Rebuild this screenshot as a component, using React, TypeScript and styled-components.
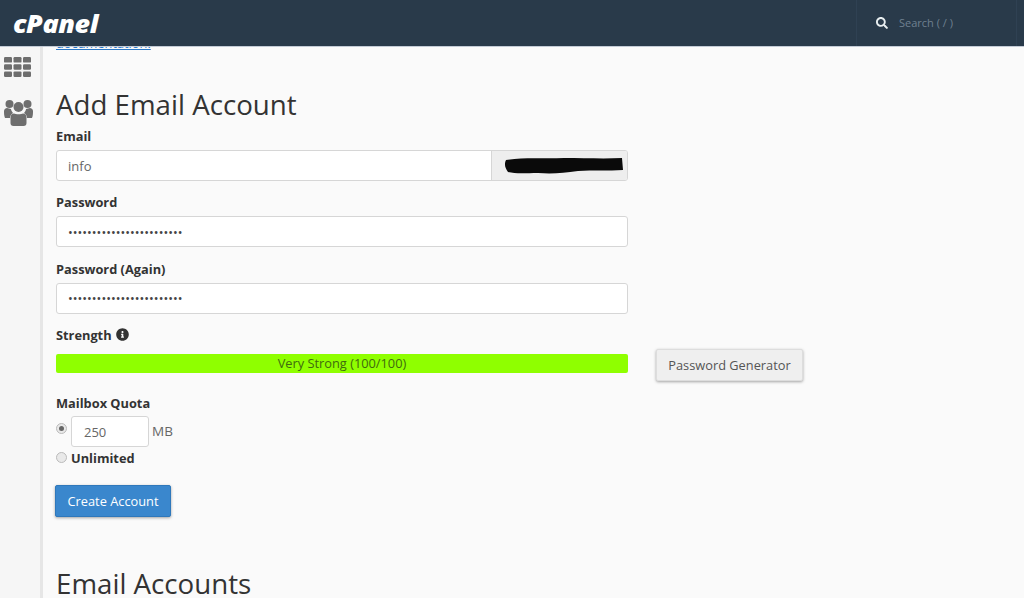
import styled, {createGlobalStyle} from "styled-components";
import {FaInfoCircle, FaSearch} from "react-icons/fa";

const GlobalStyle = createGlobalStyle`
  html, body {
    margin: 0;
    padding: 0;
    height: 100%;
    overflow: hidden;
    background: #fafafa;
    font-family: "Open Sans", "Liberation Sans", sans-serif;
    font-size: 12.8px;
    color: #333;
  }
`;

const Page = styled.div`
  width: 1024px;
  height: 598px;
  display: flex;
  flex-direction: column;
  overflow: hidden;
`;

const TopBar = styled.header`
  height: 47px;
  flex: none;
  display: flex;
  align-items: center;
  justify-content: space-between;
  background: #293a4a;
  border-bottom: 1px solid #c3cbd6;
  box-sizing: border-box;
  position: relative;
  z-index: 2;
`;

const Logo = styled.div`
  margin-left: 13px;
  font-family: "Open Sans", sans-serif;
  font-size: 24px;
  font-weight: 800;
  font-style: italic;
  letter-spacing: -0.4px;
  color: #fff;
  transform: scaleX(1.12);
  transform-origin: left center;
`;

const SearchBox = styled.div`
  width: 161px;
  height: 100%;
  margin-right: 7px;
  box-sizing: border-box;
  display: flex;
  align-items: center;
  gap: 11px;
  padding: 0 0 1px 19px;
  border-left: 1px solid #2f4153;
  border-right: 1px solid #2f4153;
  font-size: 11px;
  color: #6f8090;

  svg {
    color: #e8eef0;
    width: 12px;
    height: 12px;
  }
`;

const Body = styled.div`
  flex: 1;
  min-height: 0;
  display: flex;
`;

const SideBar = styled.nav`
  width: 43px;
  flex: none;
  box-sizing: border-box;
  display: flex;
  flex-direction: column;
  align-items: flex-start;
  gap: 22px;
  padding: 10px 0 0 4px;
  background: #f6f6f6;
  border-right: 3px solid #e6e6e6;
  color: #6e6e6e;

  svg {
    display: block;
  }
`;

const Content = styled.main`
  flex: 1;
  overflow: hidden;
  padding-left: 13px;
`;

const DocLink = styled.a`
  display: block;
  margin-top: -14px;
  color: #2a78c8;
  text-decoration: underline;
  line-height: 20px;
`;

const Heading = styled.h2<{$top: number}>`
  margin: ${(p) => p.$top}px 0 0;
  font-size: 27.7px;
  font-weight: 400;
  line-height: 42px;
  color: #333;
`;

const Field = styled.div`
  width: 572px;
  margin-bottom: 10.3px;
`;

const Label = styled.label<{$top?: number}>`
  display: flex;
  align-items: center;
  gap: 4px;
  height: 22px;
  margin-top: ${(p) => p.$top ?? 0}px;
  font-weight: 700;
  color: #333;

  svg {
    width: 13px;
    height: 13px;
  }
`;

const InputGroup = styled.div`
  display: flex;
  height: 31px;
  margin-top: 3px;
  box-sizing: border-box;
  background: #fff;
  border: 1px solid #d6d6d6;
  border-radius: 3px;
  overflow: hidden;
`;

const TextValue = styled.div`
  flex: 1;
  display: flex;
  align-items: center;
  padding-left: 11px;
  color: #666;
  font-size: 13px;
`;

const Dots = styled(TextValue)`
  font-size: 12.7px;
  color: #444;
`;

const Addon = styled.div`
  width: 136px;
  flex: none;
  box-sizing: border-box;
  display: flex;
  align-items: center;
  background: #eee;
  border-left: 1px solid #d6d6d6;
  padding-left: 12px;

  svg {
    display: block;
  }
`;

const StrengthRow = styled.div`
  display: flex;
  align-items: flex-start;
  gap: 28px;
  margin-top: 3.1px;
`;

const StrengthBar = styled.div`
  width: 572px;
  height: 19px;
  margin-top: 5px;
  display: flex;
  align-items: center;
  justify-content: center;
  background: #8fff00;
  border-radius: 2px;
  color: #3f6b0f;
`;

const GreyButton = styled.button`
  height: 32px;
  width: 147px;
  padding: 0;
  background: #efefef;
  border: 1px solid #ddd;
  border-radius: 2px;
  box-shadow: 0 1px 3px rgba(0, 0, 0, 0.35);
  font-family: inherit;
  font-size: 12.8px;
  color: #555;
`;

const QuotaRow = styled.div`
  display: flex;
  align-items: center;
  height: 31px;
  margin-top: 2px;
`;

const Radio = styled.span<{$checked?: boolean}>`
  width: 11px;
  height: 11px;
  flex: none;
  box-sizing: border-box;
  display: flex;
  align-items: center;
  justify-content: center;
  margin-right: 4px;
  border-radius: 50%;
  border: 1px solid #bbb;
  background: #e9e9e9;

  &::after {
    content: "";
    display: ${(p) => (p.$checked ? "block" : "none")};
    width: 5px;
    height: 5px;
    border-radius: 50%;
    background: #666;
  }
`;

const CheckedRadio = styled(Radio)`
  margin-top: -5px;
`;

const QuotaInput = styled.div`
  width: 78px;
  height: 31px;
  box-sizing: border-box;
  display: flex;
  align-items: center;
  padding: 2px 0 0 12px;
  background: #fff;
  border: 1px solid #d6d6d6;
  border-radius: 3px;
  font-size: 13px;
  color: #666;
`;

const Unit = styled.span`
  margin: -1px 0 0 3px;
  font-size: 13.5px;
  color: #666;
`;

const UnlimitedRow = styled.div`
  display: flex;
  align-items: center;
  height: 22px;
  font-weight: 700;
  color: #333;
`;

const PrimaryButton = styled.button`
  display: block;
  width: 116px;
  height: 32px;
  margin: 16px 0 0 -1px;
  background: #3a87cd;
  border: 1px solid #2f78bb;
  border-radius: 2px;
  box-shadow: 0 1px 3px rgba(0, 0, 0, 0.35);
  font-family: inherit;
  font-size: 12.8px;
  color: #fff;
`;

const PASSWORD_DOTS = "•".repeat(24);

// hand-scribbled blackout over the domain name
const Scribble = () => (
  <svg width="120" height="20" viewBox="0 0 120 20">
    <path
      d="M2 4C20 1 40 3 60 2c20 0 40 1 58 0l1 12c-15 1-30 0-45 1-15 2-25 3-40 2-12 0-22 1-30-1C1 12 0 8 2 4Z"
      fill="#0a0a0a"
    />
  </svg>
);

const GRID_CELLS = [0, 1, 2].flatMap((row) =>
  [0, 1, 2].map((col) => ({x: col * 9.5, y: row * 7.2}))
);

const GridIcon = () => (
  <svg width="27" height="20" viewBox="0 0 27 20" fill="currentColor">
    {GRID_CELLS.map(({x, y}) => (
      <rect key={`${x}-${y}`} x={x} y={y} width="8" height="5.6" rx="1.2" />
    ))}
  </svg>
);

const UsersIcon = () => (
  <svg width="29" height="27" viewBox="0 0 29 27" fill="currentColor">
    <circle cx="5.5" cy="5" r="4" />
    <circle cx="23.5" cy="5" r="4" />
    <circle cx="14.5" cy="8" r="5" />
    <path d="M0 12c0-2 2-3 3-3l4 1c0 1 1 3 2 4-2 1-3 3-3 5H1c-1-2-1-5-1-7Z" />
    <path d="M29 12c0-2-2-3-3-3l-4 1c0 1-1 3-2 4 2 1 3 3 3 5h5c1-2 1-5 1-7Z" />
    <path d="M10 14.5c1.500 1 7.500 1 9 0 2 0 3.500 1.500 3.500 4V24c0 2-1 3-3 3h-10c-2 0-3-1-3-3v-5.500c0-2.500 1.500-4 3.500-4Z" />
  </svg>
);

export default function App(): JSX.Element {
  return (
    <Page>
      <GlobalStyle />
      <TopBar>
        <Logo>cPanel</Logo>
        <SearchBox>
          <FaSearch />
          <span>Search ( / )</span>
        </SearchBox>
      </TopBar>
      <Body>
        <SideBar>
          <GridIcon />
          <UsersIcon />
        </SideBar>
        <Content>
          <DocLink href="#">documentation.</DocLink>
          <Heading $top={30}>Add Email Account</Heading>
          <Field>
            <Label>Email</Label>
            <InputGroup>
              <TextValue>info</TextValue>
              <Addon>
                <Scribble />
              </Addon>
            </InputGroup>
          </Field>
          <Field>
            <Label>Password</Label>
            <InputGroup>
              <Dots>{PASSWORD_DOTS}</Dots>
            </InputGroup>
          </Field>
          <Field>
            <Label>Password (Again)</Label>
            <InputGroup>
              <Dots>{PASSWORD_DOTS}</Dots>
            </InputGroup>
          </Field>
          <Label>
            Strength <FaInfoCircle />
          </Label>
          <StrengthRow>
            <StrengthBar>Very Strong (100/100)</StrengthBar>
            <GreyButton>Password Generator</GreyButton>
          </StrengthRow>
          <Label $top={11}>Mailbox Quota</Label>
          <QuotaRow>
            <CheckedRadio $checked />
            <QuotaInput>250</QuotaInput>
            <Unit>MB</Unit>
          </QuotaRow>
          <UnlimitedRow>
            <Radio />
            Unlimited
          </UnlimitedRow>
          <PrimaryButton>Create Account</PrimaryButton>
          <Heading $top={45}>Email Accounts</Heading>
        </Content>
      </Body>
    </Page>
  );
}
